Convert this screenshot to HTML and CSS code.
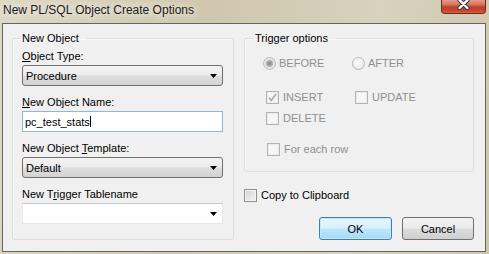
FILE: index.html
```html
<html>
  <head>
    <meta charset="utf-8">
    <link rel="stylesheet" href="styles.css">
  </head>
  <body>
    <div class="window">
      <div class="titlebar">
        <span class="title">New PL/SQL Object Create Options</span>
        <div class="close">
          <svg width="45" height="14" viewBox="0 0 45 14">
            <path d="M19 0 L27 8 M27 0 L19 8" stroke="#3b3b3b" stroke-width="4.4" stroke-linecap="round" fill="none"/>
            <path d="M19 0 L27 8 M27 0 L19 8" stroke="#ffffff" stroke-width="2.4" stroke-linecap="round" fill="none"/>
          </svg>
        </div>
      </div>

      <div class="client">
        <fieldset class="group group-object">
          <legend>New Object</legend>
          <div class="field">
            <label><u>O</u>bject Type:</label>
            <div class="select">
              <span>Procedure</span>
              <svg class="arrow" width="7" height="4" viewBox="0 0 7 4"><path d="M0 0H7L3.5 4Z" fill="#000"/></svg>
            </div>
          </div>
          <div class="field">
            <label><u>N</u>ew Object Name:</label>
            <div class="textbox"><span>pc_test_stats</span><span class="caret"></span></div>
          </div>
          <div class="field">
            <label>New Object <u>T</u>emplate:</label>
            <div class="select">
              <span>Default</span>
              <svg class="arrow" width="7" height="4" viewBox="0 0 7 4"><path d="M0 0H7L3.5 4Z" fill="#000"/></svg>
            </div>
          </div>
          <div class="field">
            <label>New T<u>r</u>igger Tablename</label>
            <div class="combo">
              <svg class="arrow" width="7" height="4" viewBox="0 0 7 4"><path d="M0 0H7L3.5 4Z" fill="#000"/></svg>
            </div>
          </div>
        </fieldset>

        <div class="side">
          <fieldset class="group group-trigger">
            <legend>Trigger options</legend>
            <div class="radios">
              <span class="opt"><span class="radio on"></span>BEFORE</span>
              <span class="opt"><span class="radio"></span>AFTER</span>
            </div>
            <div class="checks">
              <span class="opt">
                <span class="check">
                  <svg width="11" height="11" viewBox="0 0 11 11"><path d="M2 5.5 L4.3 8.5 L9 2" stroke="#a9a9a9" stroke-width="1.6" fill="none"/></svg>
                </span>INSERT
              </span>
              <span class="opt"><span class="check"></span>UPDATE</span>
              <span class="opt"><span class="check"></span>DELETE</span>
            </div>
            <div class="opt each"><span class="check"></span>For each row</div>
          </fieldset>

          <div class="copy"><span class="check enabled"></span>Copy to Clipboard</div>

          <div class="buttons">
            <button class="btn btn-default">OK</button>
            <button class="btn">Cancel</button>
          </div>
        </div>
      </div>
    </div>
  </body>
</html>
```

FILE: styles.css
```css
body {
  margin: 0;
  font-family: "Liberation Sans", Arial, sans-serif;
  font-size: 11px;
  color: #000;
}

/* window frame */
.window {
  width: 489px;
  height: 254px;
  display: flex;
  flex-direction: column;
  background: linear-gradient(100deg, #ddd7c5 0%, #cfc7ad 40%, #d8d2be 72%, #cec6ab 100%);
}
.titlebar {
  height: 23px;
  display: flex;
  align-items: flex-start;
}
.title {
  padding: 3px 0 0 3px;
  font-size: 12px;
  line-height: 14px;
  color: #1c1a22;
  text-shadow: 0 0 6px #f3f0e4, 0 0 10px #f3f0e4;
}
.close {
  margin-left: auto;
  margin-right: 3px;
  width: 45px;
  height: 14px;
  box-sizing: border-box;
  border: 1px solid #6a2a1f;
  border-top: none;
  border-radius: 0 0 4px 4px;
  background: linear-gradient(#e49a88 0%, #d6745e 35%, #c23c26 55%, #c6462c 80%, #d45e40 100%);
  display: flex;
  overflow: hidden;
}
.close svg {
  margin-left: -1px;
}

/* dialog body */
.client {
  flex: 1;
  margin: 0 3px 2px 2px;
  border: 1px solid #646464;
  background: #f0f0f0;
  display: flex;
  align-items: flex-start;
  gap: 10px;
  padding: 8px 11px 0 9px;
}

.group {
  margin: 0;
  min-width: 0;
  border: 1px solid #d5dfe5;
  border-radius: 3px;
  box-shadow: inset 1px 1px 0 #fafafa;
  box-sizing: border-box;
}
.group legend {
  padding: 0 8px 0 2px;
  margin-left: -2px;
  line-height: 13px;
}
.group-object {
  width: 222px;
  padding: 5px 10px 15px 9px;
}
.group-trigger {
  width: 230px;
  padding: 12px 10px 15px 10px;
}

/* left column fields */
.field {
  margin-bottom: 10px;
}
.field:last-child {
  margin-bottom: 0;
}
.field label {
  display: block;
  line-height: 13px;
  margin-bottom: 2px;
}
.select,
.textbox,
.combo {
  height: 21px;
  box-sizing: border-box;
  display: flex;
  align-items: center;
}
.select {
  border: 1px solid #707070;
  border-radius: 3px;
  background: linear-gradient(#f3f3f3, #ececec 48%, #dedede 52%, #d2d2d2);
  justify-content: space-between;
  padding: 0 5px 0 3px;
}
.textbox {
  border: 1px solid #8cb7df;
  background: #fff;
  padding-left: 2px;
}
.caret {
  width: 1px;
  height: 11px;
  background: #000;
}
.combo {
  border: 1px solid #e3e9ef;
  border-top-color: #c9cbd0;
  background: #fff;
  justify-content: flex-end;
  padding-right: 5px;
}

/* right column */
.side {
  width: 230px;
  display: flex;
  flex-direction: column;
}
.opt {
  display: flex;
  align-items: center;
  gap: 4px;
  line-height: 13px;
  color: #8f8f8f;
}
.radios {
  display: flex;
  margin-left: 8px;
}
.radios .opt {
  width: 89px;
  gap: 3px;
}
.checks {
  display: grid;
  grid-template-columns: 89px 89px;
  row-gap: 8px;
  margin: 21px 0 0 11px;
}
.each {
  margin: 18px 0 0 12px;
}

.radio {
  width: 13px;
  height: 13px;
  box-sizing: border-box;
  border: 1px solid #b8b8b8;
  border-radius: 50%;
  background: radial-gradient(circle at 40% 40%, #fbfbfb, #e4e4e4);
}
.radio.on {
  background: radial-gradient(circle, #8c8c8c 0, #9e9e9e 2px, #b9b9b9 3.2px, #e2e2e2 4px, #f3f3f3 100%);
}
.check {
  width: 13px;
  height: 13px;
  box-sizing: border-box;
  border: 1px solid #b3b3b3;
  background: #f6f6f6;
  box-shadow: inset 0 0 0 1px #ececec;
  display: flex;
  align-items: center;
  justify-content: center;
}
.check.enabled {
  border-color: #8e8f8f;
  background: linear-gradient(135deg, #cfd2d6, #f6f6f6);
  box-shadow: inset 0 0 0 1px #f4f4f4;
}

.copy {
  display: flex;
  align-items: center;
  gap: 4px;
  line-height: 13px;
  margin-top: 17px;
}

.buttons {
  display: flex;
  justify-content: flex-end;
  gap: 10px;
  margin-top: 15px;
}
.btn {
  width: 72px;
  height: 23px;
  box-sizing: border-box;
  padding: 0;
  border: 1px solid #707070;
  border-radius: 3px;
  background: linear-gradient(#f2f2f2, #ebebeb 48%, #dddddd 52%, #cfcfcf);
  font-family: inherit;
  font-size: 11px;
  color: #000;
}
.btn-default {
  width: 73px;
  border-color: #3c7fb1;
  background: linear-gradient(#eaf6fd, #d9f0fc 48%, #bee6fd 52%, #a7d9f5);
  box-shadow: inset 0 0 0 1px #c2e6fb;
}
```
